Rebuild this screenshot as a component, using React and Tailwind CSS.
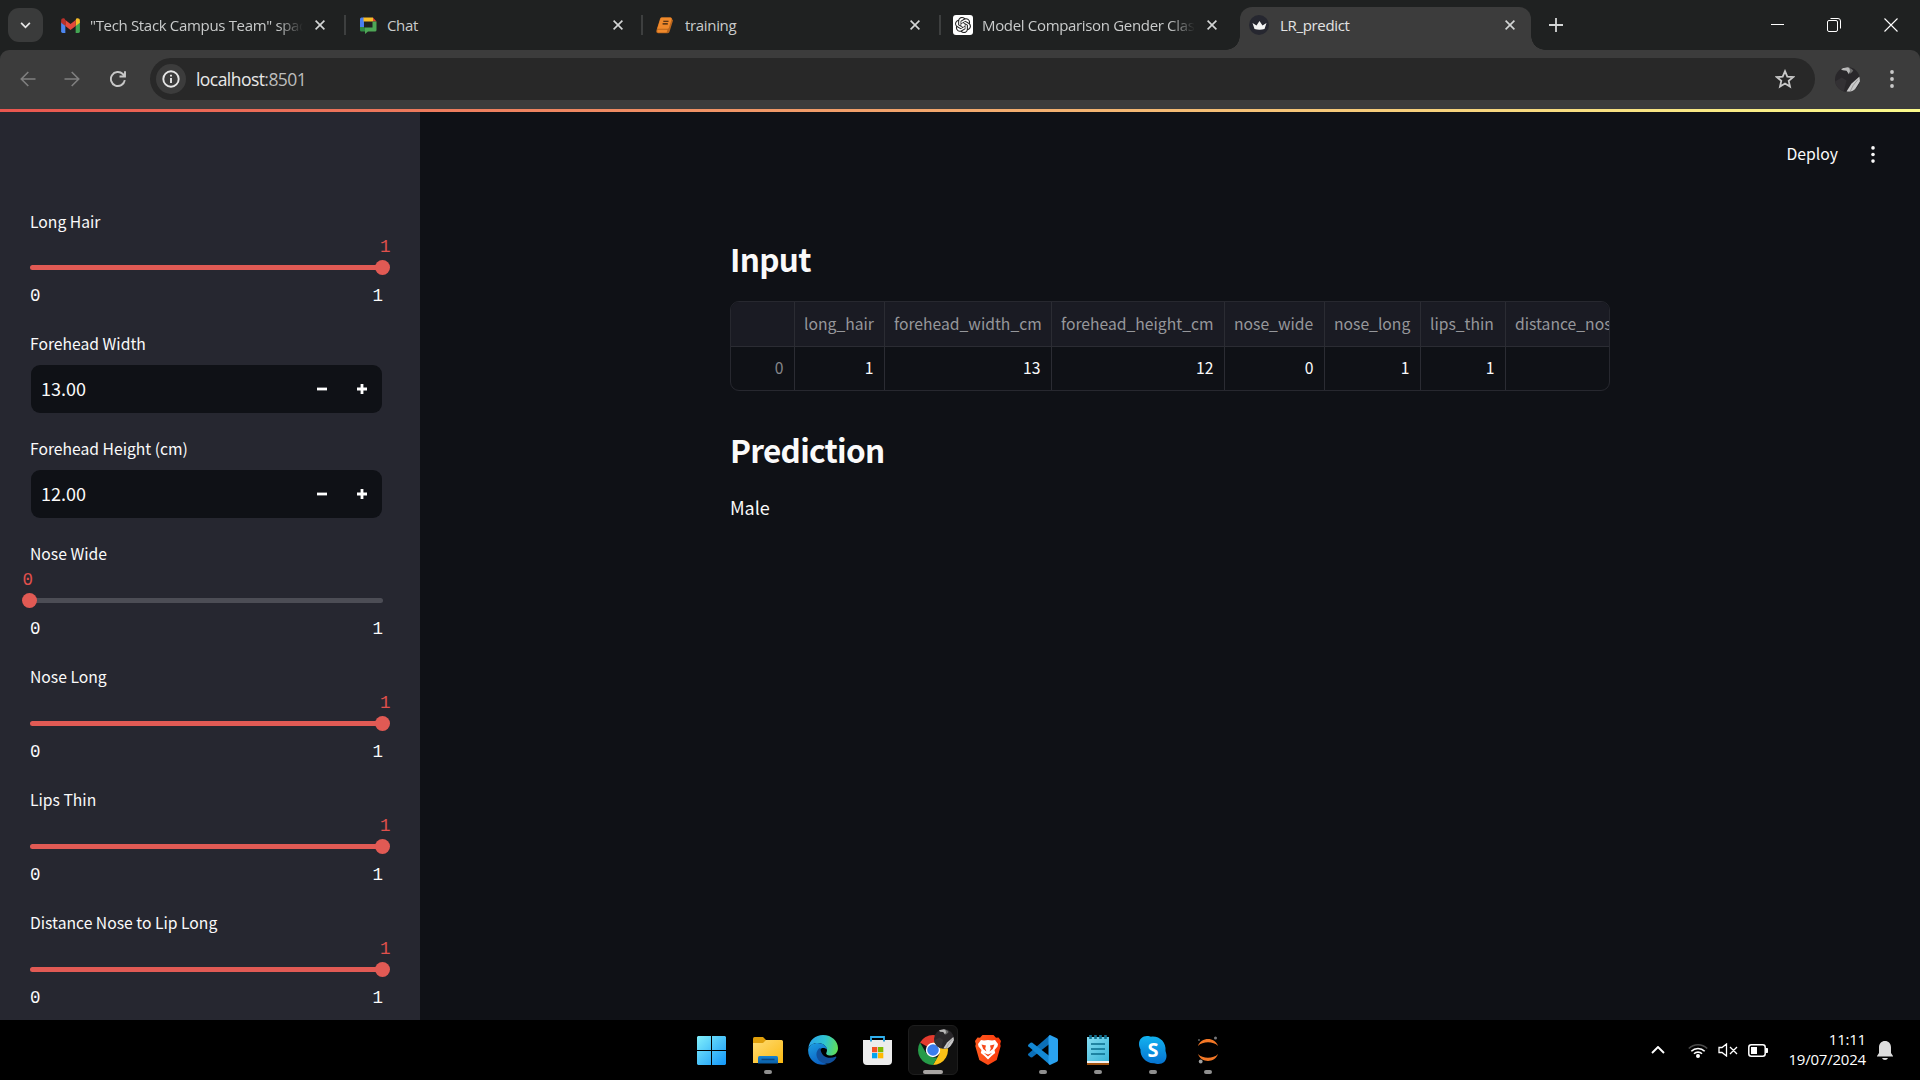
import React from "react";
import { SiOpenai } from "react-icons/si";

const SANS = "font-['Noto_Sans_CJK_SC',sans-serif]";

function Gmail() {
  return (
    <svg viewBox="0 0 20 16" className="h-[15px] w-[19px]">
      <path d="M0 4v10.500A1.500 1.500 0 0 0 1.500 16H4.500V7z" fill="#4c86f0" />
      <path d="M20 4v10.500a1.500 1.500 0 0 1-1.500 1.500H15.500V7z" fill="#43a653" />
      <path d="M15.500 2.500V8.500L20 5V2.800C20 .6 17.600-.3 16 .9z" fill="#f5bb28" />
      <path d="M4.500 8.500V2.200L10 6.300l5.500-4.100v6.300L10 12.700z" fill="#e5493b" />
      <path d="M0 2.800V5l4.500 3.500V2.200L3.800.9C2.200-.3 0 .6 0 2.800z" fill="#b9302a" />
    </svg>
  );
}

function ChatIcon() {
  return (
    <svg viewBox="0 0 17 17" className="h-[17px] w-[17px]">
      <path d="M0 2A1.500 1.500 0 0 1 1.500.5H4v9.500H0z" fill="#4b7ff0" />
      <path d="M3.500.5H13V4.500H3.500z" fill="#f7bd2a" />
      <path d="M13 .5l3.500 4H13z" fill="#e2432f" />
      <path d="M12.500 4.500h4V13a1.500 1.500 0 0 1-1.500 1.500H8L5 17v-6.500h7.500z" fill="#4ea756" />
      <path d="M0 10h4v.5h1v4H1.500A1.500 1.500 0 0 1 0 13z" fill="#2e8a43" />
    </svg>
  );
}

function BookIcon() {
  return (
    <svg viewBox="0 0 18 17" className="h-[17px] w-[18px]">
      <path d="M5.500.5H15l2 3-3.400 11a2.200 2.200 0 0 1-2 1.700H2.200A1.900 1.900 0 0 1 .4 13.600L4 1.700A1.800 1.800 0 0 1 5.500.5z" fill="#b8661e" />
      <path d="M6 .5h8.300a1.400 1.400 0 0 1 1.300 1.900l-2.700 8.400a1.500 1.500 0 0 1-1.400 1H1.200L4.500 1.600A1.600 1.600 0 0 1 6 .5z" fill="#f0892b" />
      <path d="M1.300 12.800h10.200L10.600 15.500H2.200q-1.200 0-.9-2.700z" fill="#f0892b" />
      <path d="M7.300 4.300h5.200M6.600 6.900h5.200" stroke="#2c1d10" strokeWidth="1.100" />
    </svg>
  );
}

function GptIcon() {
  return (
    <span className="flex h-5 w-5 items-center justify-center rounded-[3px] bg-white">
      <SiOpenai className="h-4 w-4 text-[#222]" />
    </span>
  );
}

function CrownIcon() {
  return (
    <span className="flex h-5 w-5 items-center justify-center rounded-full bg-[#262730]">
      <svg viewBox="0 0 14 9" className="h-[9px] w-[15px]">
        <path d="M0 2l4 2.500L7 0l3 4.500L14 2l-2 6q-5 1.400-10 0z" fill="#f4f4f4" />
      </svg>
    </span>
  );
}

function Close() {
  return (
    <svg viewBox="0 0 10 10" className="ml-[12px] h-[10px] w-[10px] shrink-0 text-[#d4d6d6]">
      <path d="M.6.6l8.800 8.800M9.400.6L.6 9.400" stroke="currentColor" strokeWidth="1.600" />
    </svg>
  );
}

function Tab({ icon, title, width, pad, gap, fade, active, divider, end = "ml-[19px]" }) {
  return (
    <div className={"flex h-[36px] shrink-0 items-center " + width + " " + pad}>
      <span className="flex w-[20px] shrink-0 items-center justify-center">{icon}</span>
      <span
        className={
          "flex-1 overflow-hidden whitespace-nowrap text-[15px] leading-5 tracking-[-0.330px] " +
          gap +
          (active ? " text-[#e3e3e3]" : " text-[#c9cbcb]") +
          (fade ? " [mask-image:linear-gradient(to_right,black_88%,transparent)]" : "")
        }
      >
        {title}
      </span>
      <Close />
      <span className={"h-[20px] w-[2px] shrink-0 " + end + (divider ? " bg-[#3d3f3f]" : "")} />
    </div>
  );
}

function Dots({ className }) {
  return (
    <svg viewBox="0 0 4 18" className={className}>
      <circle cx="2" cy="2" r="1.900" fill="currentColor" />
      <circle cx="2" cy="9" r="1.900" fill="currentColor" />
      <circle cx="2" cy="16" r="1.900" fill="currentColor" />
    </svg>
  );
}

function Avatar({ className }) {
  return (
    <svg viewBox="0 0 26 26" className={className}>
      <clipPath id="face"><circle cx="13" cy="13" r="13" /></clipPath>
      <g clipPath="url(#face)">
        <path d="M0 0h26v26H0z" fill="#29272a" />
        <path d="M0 15l7-4 5 3-3 12H0z" fill="#333134" />
        <path d="M6 2q5-2.500 9-1.500l1 3-1.500 4-2.500-3.500L8 3.500z" fill="#b9b9b9" />
        <path d="M15 1q3 .5 4 3l-3 3z" fill="#6c6c6c" />
        <path d="M25.500 10l.5 5-7 11-7-.5 5-8z" fill="#c9c9c9" />
        <path d="M24 13q-6 6-8 12" stroke="#969696" fill="none" />
      </g>
    </svg>
  );
}

function TabStrip() {
  return (
    <div className="flex h-[50px] w-full bg-[#1f2121]">
      <div className="ml-2 mt-2 flex h-[34px] w-[35px] shrink-0 items-center justify-center rounded-[11px] bg-[#3a3b3b]">
        <svg viewBox="0 0 12 8" className="h-[7px] w-[11px]">
          <path d="M1 1l5 5 5-5" fill="none" stroke="#e6e6e6" strokeWidth="2" />
        </svg>
      </div>
      <div className="mt-[7px] flex">
        <Tab icon={<Gmail />} title={'"Tech Stack Campus Team" space'} width="w-[303px]" pad="pl-[17px]" gap="ml-[10px]" fade divider />
        <Tab icon={<ChatIcon />} title="Chat" width="w-[297px]" pad="pl-[12px]" gap="ml-[9px]" divider end="ml-[18px]" />
        <Tab icon={<BookIcon />} title="training" width="w-[298px]" pad="pl-[12px]" gap="ml-[10px]" divider />
        <Tab icon={<GptIcon />} title="Model Comparison Gender Classification" width="w-[299px]" pad="pl-[12px]" gap="ml-[9px]" fade end="ml-[21px]" />
      </div>
      <div className="relative mt-[7px] h-[43px] w-[291px] shrink-0 rounded-t-[12px] bg-[#3c3c3c]">
        <Tab icon={<CrownIcon />} title="LR_predict" width="w-[291px]" pad="pl-[9px]" gap="ml-[11px]" active end="ml-[14px]" />
        <span className="absolute bottom-0 -left-[14px] h-[14px] w-[14px] bg-[radial-gradient(circle_at_0_0,transparent_13.500px,#3c3c3c_14px)]" />
        <span className="absolute bottom-0 -right-[14px] h-[14px] w-[14px] bg-[radial-gradient(circle_at_100%_0,transparent_13.500px,#3c3c3c_14px)]" />
      </div>
      <svg viewBox="0 0 14 14" className="ml-[18px] mt-[18px] h-[14px] w-[14px]">
        <path d="M7 0v14M0 7h14" stroke="#d4d6d6" strokeWidth="1.800" />
      </svg>
      <div className="ml-auto mr-[22px] mt-[17px] flex h-[15px] items-center gap-[43px]">
        <svg viewBox="0 0 13 13" className="h-[13px] w-[13px]"><path d="M0 6.500h13" stroke="#fff" /></svg>
        <svg viewBox="0 0 14 14" className="h-[14px] w-[14px]" fill="none" stroke="#fff">
          <rect x=".5" y="2.500" width="10" height="11" rx="1.500" />
          <path d="M3.500 .5H11A2.500 2.500 0 0 1 13.500 3v7.500" />
        </svg>
        <svg viewBox="0 0 14 14" className="h-[14px] w-[14px]"><path d="M.5.5l13 13M13.500.5l-13 13" stroke="#fff" strokeWidth="1.100" /></svg>
      </div>
    </div>
  );
}

function Toolbar() {
  return (
    <div className="h-[59px] bg-[#1f2121]">
      <div className="flex h-[59px] items-center rounded-t-[9px] bg-[#3c3c3c] pb-[1px]">
        <svg viewBox="0 0 16 16" className="ml-[20px] h-[16px] w-[16px]" fill="none" stroke="#7f7f7f" strokeWidth="1.600">
          <path d="M15.500 8H1.500M8.300 1L1.300 8l7 7" />
        </svg>
        <svg viewBox="0 0 16 16" className="ml-[28px] h-[16px] w-[16px]" fill="none" stroke="#7f7f7f" strokeWidth="1.600">
          <path d="M.5 8h14M7.700 1l7 7-7 7" />
        </svg>
        <svg viewBox="0 0 16 16" className="ml-[30px] h-[16px] w-[16px]" fill="none" stroke="#c8c8c8" strokeWidth="1.900">
          <path d="M14.800 9.200A7 7 0 1 1 12.800 3L14.300 4.600M15 .3v5.200H9.500" />
        </svg>
        <div className="ml-[24px] flex h-[42px] w-[1665px] items-center rounded-full bg-[#282828] pl-[6px] pr-[20px]">
          <span className="flex h-[30px] w-[30px] items-center justify-center rounded-full bg-[#3c3c3c]">
            <svg viewBox="0 0 18 18" className="h-[18px] w-[18px]" fill="none" stroke="#e6e6e6">
              <circle cx="9" cy="9" r="7.700" strokeWidth="1.900" />
              <path d="M9 8v5M9 4.700v1.900" strokeWidth="1.900" />
            </svg>
          </span>
          <span className="ml-[10px] text-[17.500px] leading-6 tracking-[-0.550px] text-[#e8e8e8]">
            localhost<span className="text-[#bdbdbd]">:8501</span>
          </span>
          <svg viewBox="0 0 20 20" className="ml-auto h-[20px] w-[20px]" fill="none" stroke="#c8c8c8" strokeWidth="1.800">
            <path d="M10 2.200l2.300 5.400 5.800.5-4.400 3.800 1.300 5.700-5-3-5 3 1.300-5.700L1.900 8.100l5.800-.5z" />
          </svg>
        </div>
        <Avatar className="ml-[20px] h-[25px] w-[25px]" />
        <Dots className="ml-[30px] h-[18px] w-[4px] text-[#c8c8c8]" />
      </div>
    </div>
  );
}

function Slider({ label, value, first }) {
  return (
    <div className={"flex flex-col " + (first ? "h-[122px]" : "h-[123px]")}>
      <div className="h-[20px] text-[15.700px] leading-5 text-[#fafafa]">{label}</div>
      <div className={"relative h-[5px] w-[353px] rounded-full " + (first ? "mt-[33px] " : "mt-[34px] ") + (value ? "bg-[#e15a54]" : "bg-[#4c4d55]")}>
        <span className={"absolute -top-[5px] h-[15px] w-[15px] rounded-full bg-[#e15a54] " + (value ? "-right-[7.400px]" : "-left-[7.600px]")} />
        <span
          className={
            "absolute -top-[28px] font-['Liberation_Mono',monospace] text-[17.500px] leading-5 text-[#e0504c] " +
            (value ? "-right-[7.500px]" : "-left-[7.500px]")
          }
        >
          {value}
        </span>
      </div>
      <div className="mt-[16px] flex justify-between font-['Liberation_Mono',monospace] text-[17.500px] leading-5 text-[#fafafa]">
        <span>0</span>
        <span>1</span>
      </div>
    </div>
  );
}

function NumberInput({ label, value }) {
  return (
    <div className="h-[105px]">
      <div className="h-[20px] text-[15.700px] leading-5 text-[#fafafa]">{label}</div>
      <div className="ml-[1px] mt-[11px] flex h-[48px] w-[351px] items-center rounded-[9px] bg-[#0f1116] pl-[10px] pr-[15px] text-[18px] text-[#fafafa]">
        <span className="flex-1 pb-[2px] leading-6">{value}</span>
        <svg viewBox="0 0 10 10" className="h-[10px] w-[10px]"><path d="M0 5h10" stroke="#fff" strokeWidth="2.800" /></svg>
        <svg viewBox="0 0 10 10" className="ml-[30px] h-[10px] w-[10px]"><path d="M0 5h10M5 0v10" stroke="#fff" strokeWidth="2.800" /></svg>
      </div>
    </div>
  );
}

function Sidebar() {
  return (
    <aside className="h-[908px] w-[420px] shrink-0 overflow-hidden bg-[#262730] pl-[30px] pr-[37px] pt-[100px]">
      <Slider label="Long Hair" value={1} first />
      <NumberInput label="Forehead Width" value="13.00" />
      <NumberInput label="Forehead Height (cm)" value="12.00" />
      <Slider label="Nose Wide" value={0} />
      <Slider label="Nose Long" value={1} />
      <Slider label="Lips Thin" value={1} />
      <Slider label="Distance Nose to Lip Long" value={1} />
    </aside>
  );
}

const columns = [
  { name: "", value: "0", width: "w-[64px]", muted: true },
  { name: "long_hair", value: "1", width: "w-[90px]" },
  { name: "forehead_width_cm", value: "13", width: "w-[167px]" },
  { name: "forehead_height_cm", value: "12", width: "w-[173px]" },
  { name: "nose_wide", value: "0", width: "w-[100px]" },
  { name: "nose_long", value: "1", width: "w-[96px]" },
  { name: "lips_thin", value: "1", width: "w-[85px]" },
  { name: "distance_nose_to_lip_long", value: "", width: "w-[104px]", last: true },
];

function DataTable() {
  return (
    <div className="flex h-[90px] w-[880px] overflow-hidden rounded-[9px] border border-[#27282f] text-[15.700px]">
      {columns.map((c) => (
        <div key={c.name} className={"flex shrink-0 flex-col overflow-hidden whitespace-nowrap " + c.width + (c.last ? "" : " border-r border-[#2b2c33]")}>
          <div className="flex h-[45px] items-center border-b border-[#2b2c33] bg-[#1a1b23] pl-[9px] text-[#96979b]">{c.name}</div>
          <div className={"flex h-[43px] items-center justify-end pb-px pr-[10.500px] " + (c.muted ? "text-[#85868a]" : "text-[#fafafa]")}>{c.value}</div>
        </div>
      ))}
    </div>
  );
}

function Main() {
  return (
    <main className="h-[908px] flex-1 bg-[#0f1116]">
      <div className="flex h-[84px] items-center justify-end pr-[45.500px] text-[#fafafa]">
        <span className="text-[15.750px] leading-5">Deploy</span>
        <Dots className="ml-[32.500px] h-[17px] w-[4px]" />
      </div>
      <div className="ml-[310px] w-[880px] pt-[40px] text-[#fafafa]">
        <h3 className="h-[65px] text-[31.500px] font-bold leading-[44px] tracking-[-0.700px]">Input</h3>
        <DataTable />
        <h3 className="mt-[36px] text-[31.500px] font-bold leading-[44px] tracking-[-0.700px]">Prediction</h3>
        <p className="mt-[24px] text-[18px] leading-[24px]">Male</p>
      </div>
    </main>
  );
}

function WindowsIcon() {
  return (
    <svg viewBox="0 0 29 29" className="mr-[3px] h-[29px] w-[29px]">
      <defs>
        <linearGradient id="win" x1="0" y1="0" x2="29" y2="29" gradientUnits="userSpaceOnUse">
          <stop stopColor="#82f0fb" /><stop offset="1" stopColor="#1296f8" />
        </linearGradient>
      </defs>
      <path d="M1 0h13v14H0V1zM15 0h13l1 1v13H15zM0 15h14v14H1l-1-1zM15 15h14v13l-1 1H15z" fill="url(#win)" />
    </svg>
  );
}

function FolderIcon() {
  return (
    <svg viewBox="0 0 30 27" className="h-[27px] w-[30px]">
      <defs>
        <linearGradient id="fold" x1="0" y1="0" x2="1" y2="1"><stop stopColor="#ffdc74" /><stop offset="1" stopColor="#fbb911" /></linearGradient>
        <linearGradient id="foldb" x1="0" y1="0" x2="0" y2="1"><stop stopColor="#1683d2" /><stop offset="1" stopColor="#0b5ea5" /></linearGradient>
      </defs>
      <path d="M0 1.500Q0 0 1.500 0H10l3 3v5H0z" fill="#e09f0a" />
      <path d="M0 6h10l3-3h15.500Q30 3 30 4.500V26H0z" fill="url(#fold)" />
      <path d="M5 26.500v-6q0-1.500 1.500-1.500h17q1.500 0 1.500 1.500v6z" fill="url(#foldb)" />
      <path d="M8.500 22.500h13" stroke="#0a4680" strokeWidth="1.500" />
    </svg>
  );
}

function EdgeIcon() {
  return (
    <svg viewBox="0 0 30 30" className="h-[30px] w-[30px]">
      <defs>
        <linearGradient id="eg" x1="2" y1="8" x2="30" y2="14" gradientUnits="userSpaceOnUse">
          <stop stopColor="#2aa7e8" /><stop offset=".5" stopColor="#30c4cf" /><stop offset="1" stopColor="#63df50" />
        </linearGradient>
        <linearGradient id="eb" x1="0" y1="10" x2="10" y2="30" gradientUnits="userSpaceOnUse">
          <stop stopColor="#1c9be0" /><stop offset="1" stopColor="#0b62c4" />
        </linearGradient>
      </defs>
      <path d="M.3 13C1.500 5 7.500 0 15 0c9 0 15 6.500 15 13 0 5-3.800 7.500-7.500 7.500-3.500 0-5-1.500-4-3C20.500 14 17 8 10 8 6 8 2 10 .3 13z" fill="url(#eg)" />
      <path d="M.2 14C1.500 10 5.500 8 9.500 8c6 0 9.500 3.500 9.500 6.500-6-4.500-10 2-7.500 7.500 2 4.500 6 7 8 7C11 32-.8 26 .2 14z" fill="url(#eb)" />
      <path d="M12.500 12.700c-5 2-5.500 9.500-1 13.300 5 4.200 13 3.500 16.800-3.500.3-.7-.2-1.200-1-.8-6.300 3-14.800.3-14.800-9z" fill="#11509c" />
    </svg>
  );
}

function StoreIcon() {
  return (
    <svg viewBox="0 0 29 29" className="mr-px h-[29px] w-[29px]">
      <path d="M8 6V1h13v5" fill="none" stroke="#2fb0ee" strokeWidth="1.800" />
      <path d="M0 4h7v1.500h2V4h11v1.500h2V4h7v21q0 4-4 4H4q-4 0-4-4z" fill="#ececec" />
      <path d="M9 11h5.300v5.300H9z" fill="#f25022" />
      <path d="M15 11h5.300v5.300H15z" fill="#7fba00" />
      <path d="M9 17h5.300v5.300H9z" fill="#00a4ef" />
      <path d="M15 17h5.300v5.300H15z" fill="#ffb900" />
    </svg>
  );
}

function ChromeIcon() {
  return (
    <span className="relative">
      <svg viewBox="0 0 30 30" className="h-[30px] w-[30px]">
        <path d="M15 15L2.010 7.500A15 15 0 0 1 27.990 7.500z" fill="#e33b2e" />
        <path d="M15 7.500h12.990A15 15 0 0 1 15 30l6.500-11.250z" fill="#fbc116" />
        <path d="M2.010 7.500L8.500 18.750 15 22.500h4.330L15 30A15 15 0 0 1 2.010 7.500z" fill="#269b48" />
        <circle cx="15" cy="15" r="7.200" fill="#fff" />
        <circle cx="15" cy="15" r="5.800" fill="#3b7ded" />
      </svg>
      <Avatar className="absolute -right-[6px] -top-[6px] h-[20px] w-[20px]" />
    </span>
  );
}

function BraveIcon() {
  return (
    <svg viewBox="0 0 26 30" className="h-[30px] w-[26px]">
      <defs>
        <linearGradient id="br" x1="0" y1="0" x2="1" y2="0"><stop stopColor="#ff5a1f" /><stop offset="1" stopColor="#fb3a0c" /></linearGradient>
      </defs>
      <path d="M7.500 0h11l2.500 2.700 2.500-.2L26 6l-.8 3 .5 2-4 14L13 30l-8.700-5-4-14 .5-2L0 6l2.500-3.500 2.500.2z" fill="url(#br)" />
      <path d="M6 5l3 .6L13 5l4 .6 3-.6 3 4-.5 2.500-3 3.500.7 3-3.700 3L13 24.500 9.500 21l-3.700-3 .7-3-3-3.500L3 9z" fill="#fff" />
      <path d="M6.500 9.500l4.500 1-.8 3 1.300 3-3.300-2.500zM19.500 9.500l-4.500 1 .8 3-1.300 3 3.300-2.500zM9 18l4 1.500 4-1.500-4 3.500z" fill="#f5481b" />
    </svg>
  );
}

function CodeIcon() {
  return (
    <svg viewBox="0 0 30 30" className="h-[30px] w-[30px]">
      <path d="M22 0v8.500L4 22.500l-1.500-.2L.3 20.300q-.6-.8 0-1.500z" fill="#0b6fb8" />
      <path d="M22 30v-8.500L4 7.500l-1.500.2L.3 9.700q-.6.800 0 1.500z" fill="#1388d4" />
      <path d="M22 0l7 3.200q1 .6 1 1.800v20q0 1.200-1 1.800L22 30q-1.500-.3-1.500-2V2q0-1.700 1.500-2z" fill="#2aa2f0" />
    </svg>
  );
}

function NotepadIcon() {
  return (
    <svg viewBox="0 0 22 30" className="h-[30px] w-[22px]">
      <defs>
        <linearGradient id="np" x1="0" y1="0" x2="1" y2="1"><stop stopColor="#84dcf2" /><stop offset="1" stopColor="#39b4d6" /></linearGradient>
      </defs>
      <path d="M0 25h22v5H0z" fill="#a3530f" />
      <path d="M0 24h22v4H0z" fill="#f1f1f1" />
      <path d="M0 2h22v24H0z" fill="url(#np)" />
      <path d="M4 9h14M4 14h14M4 19h14" stroke="#0a6c8c" strokeWidth="1.600" />
      <path d="M3.500 0v4M8.500 0v4M13.500 0v4M18.500 0v4" stroke="#126f8e" strokeWidth="2.600" />
    </svg>
  );
}

function SkypeIcon() {
  return (
    <svg viewBox="0 0 28 30" className="h-[30px] w-[28px]">
      <defs>
        <linearGradient id="sk" x1="0" y1="0" x2="0" y2="1"><stop stopColor="#12b3f0" /><stop offset="1" stopColor="#0672d0" /></linearGradient>
      </defs>
      <path d="M8 1c2 0 3 .7 4 .7C20 .5 27.500 7 26.500 16c.3 1.500 1 2.500 1 5 0 5-3.500 8-8 8-2 0-3-.8-4.500-.8C7 28.500 1 22 1.500 14.500.5 12.500 0 11 0 9c0-5 3.500-8 8-8z" fill="url(#sk)" />
      <text x="14" y="21.500" textAnchor="middle" fontSize="20" fontWeight="bold" fill="#fff" className="font-['Open_Sans',sans-serif]">S</text>
    </svg>
  );
}

function JupyterIcon() {
  return (
    <svg viewBox="0 0 20 28" className="h-[28px] w-[20px]">
      <path d="M0 10C3 .8 17 .8 20 10 15.500 5 4.500 5 0 10zM0 18c3 9.200 17 9.200 20 0-4.500 5-15.500 5-20 0z" fill="#f37726" />
      <circle cx="17.500" cy="2" r="1.500" fill="#77787b" />
      <circle cx="1" cy="4" r="1" fill="#616262" />
      <circle cx="2.700" cy="25.500" r="1.900" fill="#9e9e9e" />
    </svg>
  );
}

const apps = [
  { id: "start", icon: <WindowsIcon /> },
  { id: "files", icon: <FolderIcon />, run: true },
  { id: "edge", icon: <EdgeIcon /> },
  { id: "store", icon: <StoreIcon /> },
  { id: "chrome", icon: <ChromeIcon />, run: true, active: true },
  { id: "brave", icon: <BraveIcon /> },
  { id: "code", icon: <CodeIcon />, run: true },
  { id: "notes", icon: <NotepadIcon />, run: true },
  { id: "skype", icon: <SkypeIcon />, run: true },
  { id: "jupyter", icon: <JupyterIcon />, run: true },
];

function Taskbar() {
  return (
    <footer className="flex h-[60px] items-start bg-black pt-[5px]">
      <div className="ml-[688px] flex">
        {apps.map((a) => (
          <div key={a.id} className={"relative mr-[5px] flex h-[50px] w-[50px] items-center justify-center rounded-[6px] " + (a.active ? "border border-[#1d1d1d] bg-[#101010]" : "")}>
            {a.icon}
            {a.run && (
              <span className={"absolute h-[4px] rounded-full " + (a.active ? "bottom-0 left-[14px] w-[20px] bg-[#a8a5a3]" : "bottom-px left-[21px] w-[8px] bg-[#8f8f8f]")} />
            )}
          </div>
        ))}
      </div>
      <div className="ml-auto flex h-[50px] items-center pr-[27px]">
        <svg viewBox="0 0 14 8" className="h-[8px] w-[14px]"><path d="M1 7l6-6 6 6" fill="none" stroke="#fff" strokeWidth="1.900" /></svg>
        <svg viewBox="0 0 20 15" className="ml-[23px] h-[15px] w-[20px]" fill="none" stroke="#fff" strokeWidth="1.600">
          <path d="M.8 5.500a13 13 0 0 1 18.400 0" stroke="#4a4a4a" />
          <path d="M3.300 8.200a9.500 9.500 0 0 1 13.400 0M6 10.800a5.700 5.700 0 0 1 8 0" />
          <circle cx="10" cy="13" r="1.200" fill="#fff" />
        </svg>
        <svg viewBox="0 0 20 14" className="ml-[10px] h-[14px] w-[20px]" fill="none" stroke="#fff" strokeWidth="1.300">
          <path d="M1 4.500h3L8.500 1v12L4 9.500H1zM12 4l7 7M19 4l-7 7" />
        </svg>
        <svg viewBox="0 0 20 13" className="ml-[10px] h-[13px] w-[20px]">
          <rect x=".8" y=".8" width="16.400" height="11.400" rx="2.500" fill="none" stroke="#fff" strokeWidth="1.500" />
          <path d="M3 3h6v7H3z" fill="#fff" />
          <path d="M18 4.500h1.500v4H18z" fill="#fff" stroke="#fff" />
        </svg>
        <div className="ml-[19px] w-[79px] whitespace-nowrap pb-[3px] text-right font-['Open_Sans',sans-serif] text-[15px] leading-5 tracking-[-0.200px] text-white">
          <div>11:11</div>
          <div>19/07/2024</div>
        </div>
        <svg viewBox="0 0 16 19" className="ml-[11px] h-[19px] w-[16px]">
          <path d="M0 15l2-3V6.500C2 2.500 4.500 0 8 0s6 2.500 6 6.500V12l2 3v.5H0z" fill="#dcdcdc" />
          <path d="M5 17h6q-.8 2-3 2t-3-2z" fill="#dcdcdc" />
        </svg>
      </div>
    </footer>
  );
}

export default function App() {
  return (
    <div className="h-[1080px] w-[1920px] overflow-hidden bg-black">
      <header className="font-['Open_Sans',sans-serif]">
        <TabStrip />
        <Toolbar />
      </header>
      <div className="h-[3px] bg-[linear-gradient(90deg,#e9564f,#fbfb8c)]" />
      <div className={"flex h-[908px] " + SANS}>
        <Sidebar />
        <Main />
      </div>
      <Taskbar />
    </div>
  );
}
